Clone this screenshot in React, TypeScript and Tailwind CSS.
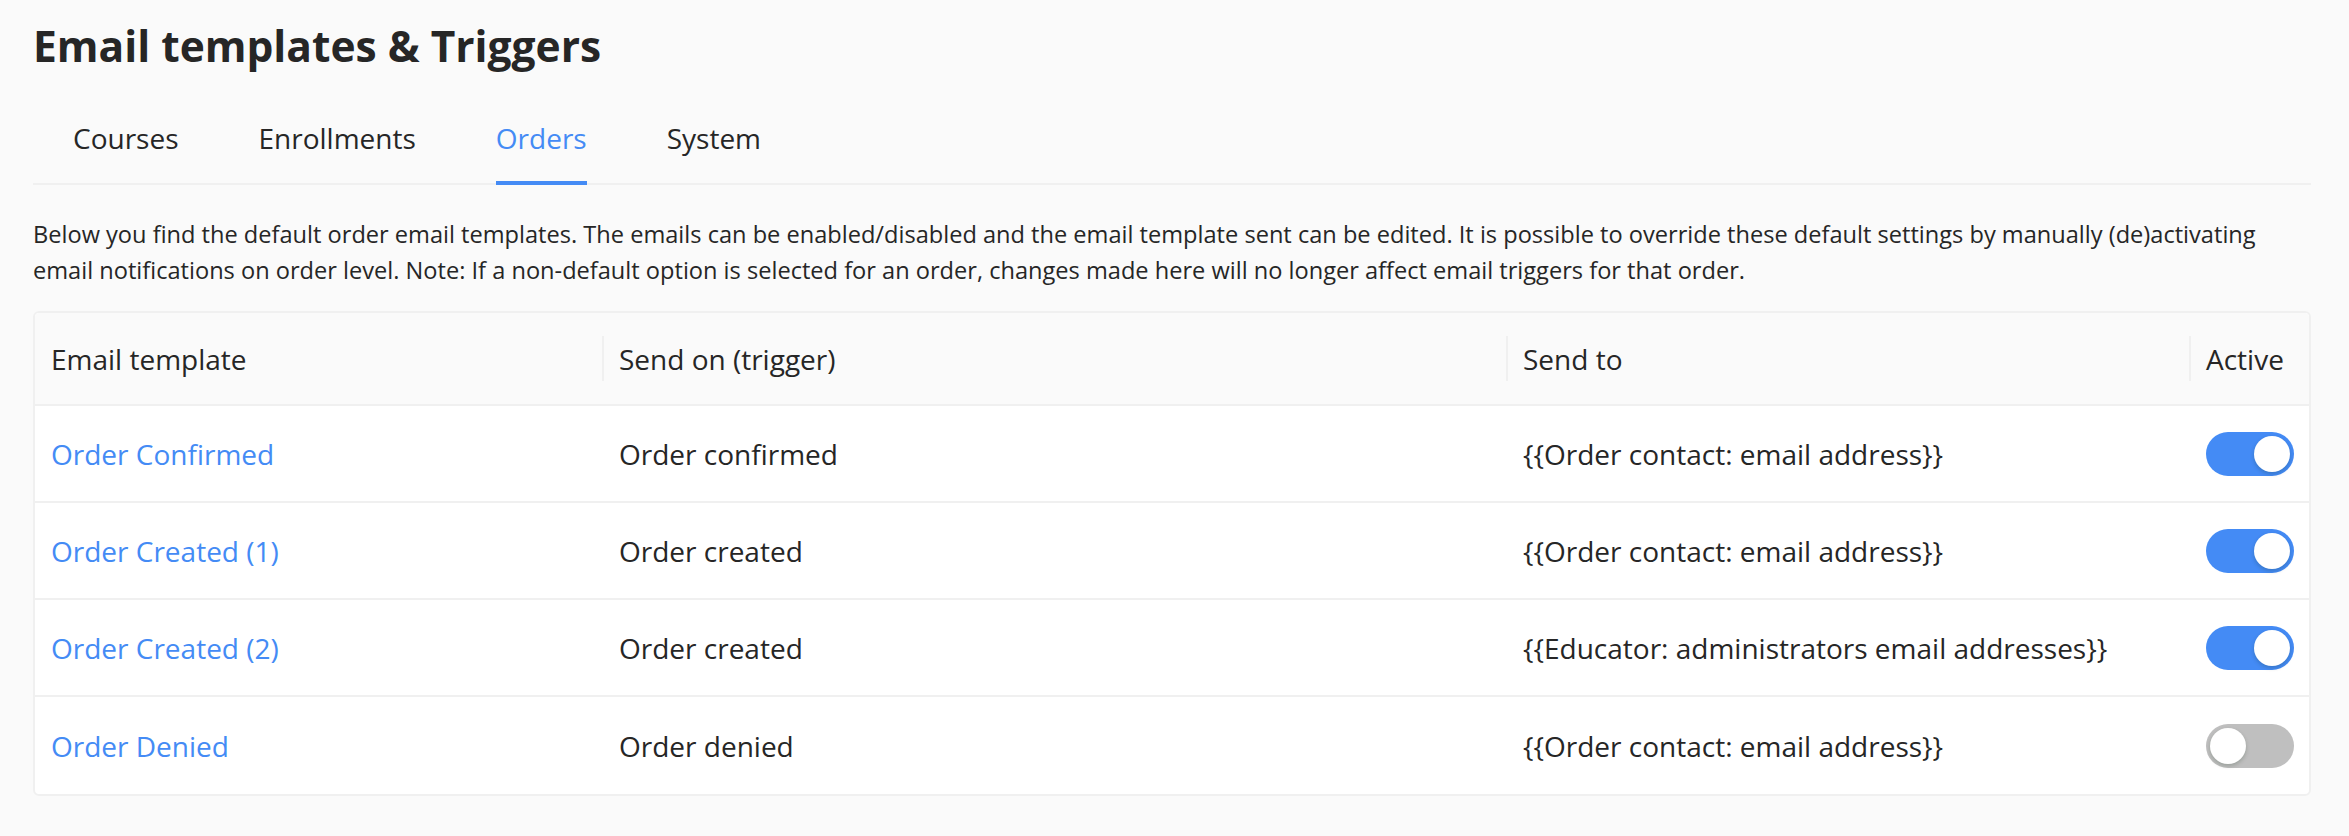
import { useState } from 'react';

type Template = {
  id: string;
  name: string;
  trigger: string;
  sendTo: string;
  active: boolean;
};

const tabs = ['Courses', 'Enrollments', 'Orders', 'System'];

const initialTemplates: Template[] = [
  { id: 'confirmed', name: 'Order Confirmed', trigger: 'Order confirmed', sendTo: '{{Order contact: email address}}', active: true },
  { id: 'created-1', name: 'Order Created (1)', trigger: 'Order created', sendTo: '{{Order contact: email address}}', active: true },
  { id: 'created-2', name: 'Order Created (2)', trigger: 'Order created', sendTo: '{{Educator: administrators email addresses}}', active: true },
  { id: 'denied', name: 'Order Denied', trigger: 'Order denied', sendTo: '{{Order contact: email address}}', active: false },
];

function Toggle({ checked, onChange }: { checked: boolean; onChange: () => void }) {
  return (
    <button
      type="button"
      role="switch"
      aria-checked={checked}
      onClick={onChange}
      className={`flex h-[44px] w-[88px] items-center rounded-full p-[4px] ${
        checked ? 'justify-end bg-[#448bf5]' : 'justify-start bg-[#bfbfbf]'
      }`}
    >
      <span className="block h-[36px] w-[36px] rounded-full bg-white shadow-[0_2px_4px_rgba(0,35,11,0.2)]" />
    </button>
  );
}

function HeaderCell({ label, divider }: { label: string; divider?: boolean }) {
  return (
    <div className="flex h-full items-center">
      {divider && <div className="h-[45px] w-[2px] bg-[#f0f0f0]" />}
      <span className={divider ? 'ml-[15px]' : 'ml-[16px]'}>{label}</span>
    </div>
  );
}

export default function App() {
  const [activeTab, setActiveTab] = useState('Orders');
  const [templates, setTemplates] = useState(initialTemplates);

  const toggle = (id: string) => {
    setTemplates((prev) => prev.map((t) => (t.id === id ? { ...t, active: !t.active } : t)));
  };

  return (
    <div
      className="min-h-screen bg-[#fafafa] pl-[33px] pr-[38px] text-[#262626]"
      style={{ fontFamily: '"Open Sans", "Noto Sans", sans-serif' }}
    >
      <h1 className="pt-[20px] text-[42.5px] font-bold leading-[52px]">Email templates &amp; Triggers</h1>

      <nav className="mt-[26px] flex gap-[80px] border-b-2 border-[#f0f0f0] pl-[40px]">
        {tabs.map((tab) => (
          <button
            key={tab}
            type="button"
            onClick={() => setActiveTab(tab)}
            className={`-mb-[2px] border-b-4 pt-[20px] pb-[23px] text-[28px] leading-[40px] ${
              activeTab === tab ? 'border-[#448bf5] text-[#448bf5]' : 'border-transparent'
            }`}
          >
            {tab}
          </button>
        ))}
      </nav>

      <p className="mt-[31px] text-[23.6px] leading-[36px]">
        Below you find the default order email templates. The emails can be enabled/disabled and the email template sent can
        be edited. It is possible to override these default settings by manually (de)activating email notifications on order
        level. Note: If a non-default option is selected for an order, changes made here will no longer affect email triggers
        for that order.
      </p>

      <div className="mt-[23px] overflow-hidden rounded-[6px] border-2 border-[#f0f0f0] bg-white text-[28px]">
        <div className="grid h-[93px] grid-cols-[567px_904px_683px_1fr] border-b-2 border-[#f0f0f0] bg-[#fafafa]">
          <HeaderCell label="Email template" />
          <HeaderCell label="Send on (trigger)" divider />
          <HeaderCell label="Send to" divider />
          <HeaderCell label="Active" divider />
        </div>

        {templates.map((t, i) => (
          <div
            key={t.id}
            className={`grid h-[97px] grid-cols-[567px_904px_683px_1fr] items-center ${
              i < templates.length - 1 ? 'border-b-2 border-[#f0f0f0]' : ''
            }`}
          >
            <a href="#" className="pl-[16px] text-[#448bf5]">
              {t.name}
            </a>
            <div className="pl-[17px]">{t.trigger}</div>
            <div className="pl-[17px]">{t.sendTo}</div>
            <div className="pl-[17px]">
              <Toggle checked={t.active} onChange={() => toggle(t.id)} />
            </div>
          </div>
        ))}
      </div>
    </div>
  );
}
